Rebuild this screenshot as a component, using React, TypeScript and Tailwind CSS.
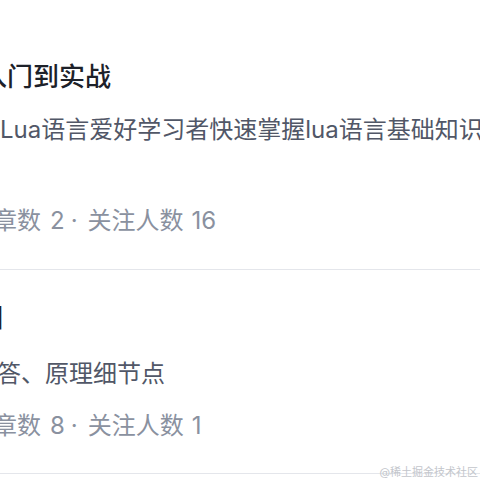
import React from "react";

const font = { fontFamily: '"Inter", "Noto Sans CJK SC", sans-serif' };

const Meta = ({ articles, followers }: { articles: number; followers: number }) => (
  <div className="-ml-[31px] flex items-center whitespace-nowrap text-[24px] leading-[34px] text-[#8a919f]">
    <span>文章数</span>
    <span className="ml-[9px]">{articles}</span>
    <span className="ml-[6px] mr-[10px]">·</span>
    <span>关注人数</span>
    <span className="ml-[8px]">{followers}</span>
  </div>
);

const App = () => {
  return (
    <div className="relative w-[480px] h-[480px] overflow-hidden bg-white" style={font}>
      {/* Column item 1 */}
      <div className="pt-[59px] pb-[31px] border-b border-[#e4e6eb]">
        <div className="-ml-[19px] whitespace-nowrap text-[26px] leading-[36px] font-medium text-[#1d2129]">
          入门到实战
        </div>
        <div className="mt-[17px] mb-[56px] whitespace-nowrap text-[24px] leading-[36px] text-[#515767]">
          Lua语言爱好学习者快速掌握lua语言基础知识
        </div>
        <Meta articles={2} followers={16} />
      </div>

      {/* Column item 2 */}
      <div className="pt-[30px] pb-[30px] border-b border-[#e4e6eb]">
        <div className="-ml-[21px] whitespace-nowrap text-[26px] leading-[36px] font-semibold text-[#1d2129]">
          目
        </div>
        <div className="-ml-[3px] mt-[20px] mb-[17px] whitespace-nowrap text-[24px] leading-[36px] text-[#515767]">
          答、原理细节点
        </div>
        <Meta articles={8} followers={1} />
      </div>

      {/* Watermark */}
      <div className="absolute right-[2px] bottom-[1px] text-[11px] leading-[13px] text-[#c3c6cc]">
        @稀土掘金技术社区
      </div>
    </div>
  );
};

export default App;
